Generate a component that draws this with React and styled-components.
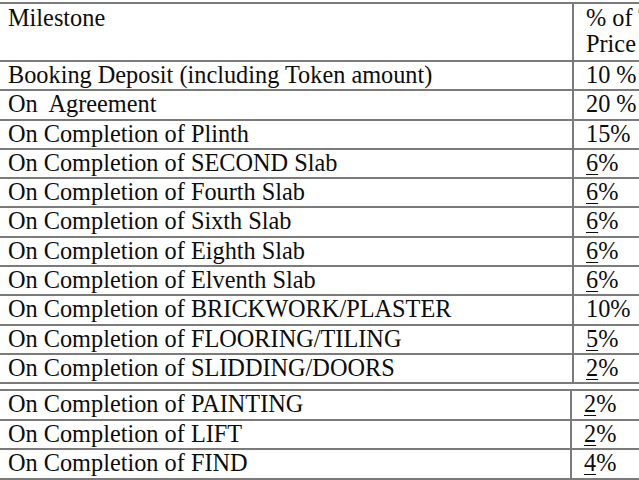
import React from "react";
import styled, { createGlobalStyle } from "styled-components";

const Global = createGlobalStyle`
  html, body {
    margin: 0;
    padding: 0;
    background: #ffffff;
    overflow: hidden;
  }
  body {
    font-family: "Liberation Serif", "Times New Roman", serif;
    color: #0c0c0c;
  }
`;

const Page = styled.div`
  width: 720px;
  padding-top: 2px;
`;

const Table = styled.div`
  border-top: 2px solid #7b7b7b;
  margin-top: ${(p) => p.$gap || 0}px;
`;

const Row = styled.div`
  display: grid;
  grid-template-columns: ${(p) => p.$split}px 1fr;
  height: ${(p) => p.$h}px;
  box-sizing: border-box;
  border-bottom: 2px solid #7b7b7b;
`;

const Cell = styled.div`
  font-family: "Liberation Serif", "Times New Roman", serif;
  font-size: 24.3px;
  line-height: 26px;
  padding: ${(p) => (p.$head ? "1px 0 0 8px" : "0 0 0 8px")};
  white-space: pre;
  overflow: hidden;

  & + & {
    border-left: 2px solid #7b7b7b;
    padding-left: 12px;
  }
`;

const Digit = styled.span`
  text-decoration: underline;
  text-decoration-thickness: 1px;
  text-underline-offset: 3px;
`;

const upper = [
  ["Booking Deposit (including Token amount)", "10 %"],
  ["On  Agreement", "20 %"],
  ["On Completion of Plinth", "15%"],
  ["On Completion of SECOND Slab", "_6%"],
  ["On Completion of Fourth Slab", "_6%"],
  ["On Completion of Sixth Slab", "_6%"],
  ["On Completion of Eighth Slab", "_6%"],
  ["On Completion of Elventh Slab", "_6%"],
  ["On Completion of BRICKWORK/PLASTER", "10%"],
  ["On Completion of FLOORING/TILING", "_5%"],
  ["On Completion of SLIDDING/DOORS", "_2%"],
];

const lower = [
  ["On Completion of PAINTING", "_2%"],
  ["On Completion of LIFT", "_2%"],
  ["On Completion of FIND", "_4%"],
];

const Share = ({ value }) =>
  value.startsWith("_") ? (
    <>
      <Digit>{value[1]}</Digit>
      {value.slice(2)}
    </>
  ) : (
    value
  );

const App = () => (
  <Page>
    <Global />
    <Table>
      <Row $split={572} $h={58}>
        <Cell $head>Milestone</Cell>
        <Cell $head>
          % of Total
          <br />
          Price
        </Cell>
      </Row>
      {upper.map(([label, value]) => (
        <Row key={label} $split={572} $h={29.3}>
          <Cell>{label}</Cell>
          <Cell>
            <Share value={value} />
          </Cell>
        </Row>
      ))}
    </Table>
    <Table $gap={5}>
      {lower.map(([label, value]) => (
        <Row key={label} $split={570} $h={29.6}>
          <Cell>{label}</Cell>
          <Cell>
            <Share value={value} />
          </Cell>
        </Row>
      ))}
    </Table>
  </Page>
);

export default App;
